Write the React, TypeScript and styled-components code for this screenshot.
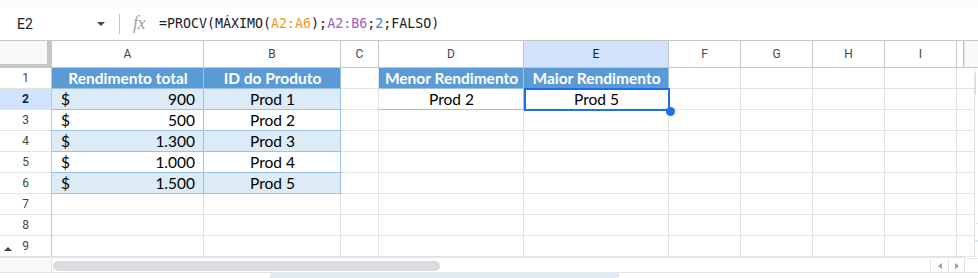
import React from 'react';
import styled, { createGlobalStyle } from 'styled-components';

const GlobalStyle = createGlobalStyle`
  body {
    margin: 0;
    background: #fff;
    font-family: Roboto, "Liberation Sans", Arial, sans-serif;
  }
`;

const GRID = '#e2e3e3';
const HEAD_LINE = '#c4c7c5';
const TABLE_LINE = '#9bc2e6';
const TABLE_HEAD = '#5b9bd5';
const TABLE_BAND = '#ddebf7';
const SELECT = '#1a73e8';

const columns = [
  { id: 'A', w: 152 },
  { id: 'B', w: 137 },
  { id: 'C', w: 38 },
  { id: 'D', w: 145 },
  { id: 'E', w: 145 },
  { id: 'F', w: 72 },
  { id: 'G', w: 72 },
  { id: 'H', w: 72 },
  { id: 'I', w: 72 },
];

const template = `52px ${columns.map((c) => `${c.w}px`).join(' ')} 7px`;

type Kind = 'head' | 'band' | 'white' | 'sel' | 'empty';
interface CellDef {
  kind: Kind;
  text?: string;
  money?: string;
}

const e: CellDef = { kind: 'empty' };

const rows: CellDef[][] = [
  [
    { kind: 'head', text: 'Rendimento total' },
    { kind: 'head', text: 'ID do Produto' },
    e,
    { kind: 'head', text: 'Menor Rendimento' },
    { kind: 'head', text: 'Maior Rendimento' },
  ],
  [
    { kind: 'band', money: '900' },
    { kind: 'band', text: 'Prod 1' },
    e,
    { kind: 'white', text: 'Prod 2' },
    { kind: 'sel', text: 'Prod 5' },
  ],
  [{ kind: 'white', money: '500' }, { kind: 'white', text: 'Prod 2' }],
  [{ kind: 'band', money: '1.300' }, { kind: 'band', text: 'Prod 3' }],
  [{ kind: 'white', money: '1.000' }, { kind: 'white', text: 'Prod 4' }],
  [{ kind: 'band', money: '1.500' }, { kind: 'band', text: 'Prod 5' }],
  [],
  [],
  [],
];

const Page = styled.div`
  width: 978px;
  height: 278px;
  display: flex;
  flex-direction: column;
  overflow: hidden;
`;

const TopStrip = styled.div`
  height: 8px;
  background: #f9fbfd;
`;

const FormulaBar = styled.div`
  height: 34px;
  box-sizing: border-box;
  border-bottom: 1px solid ${HEAD_LINE};
  display: flex;
  align-items: center;
`;

const NameBox = styled.div`
  width: 112px;
  box-sizing: border-box;
  padding: 0 7px 0 17px;
  display: flex;
  align-items: center;
  justify-content: space-between;
  font-size: 14px;
  color: #202124;
`;

const Caret = styled.span`
  width: 0;
  height: 0;
  border-left: 4px solid transparent;
  border-right: 4px solid transparent;
  border-top: 4px solid #444746;
`;

const Divider = styled.div`
  width: 1px;
  height: 20px;
  margin-left: 7px;
  background: ${HEAD_LINE};
`;

const Fx = styled.span`
  width: 16px;
  margin: 0 10px 0 13px;
  font-family: "Liberation Serif", "DejaVu Serif", serif;
  font-style: italic;
  font-size: 18px;
  color: #a0a4a8;
  letter-spacing: -0.5px;
`;

const Formula = styled.div`
  font-family: "DejaVu Sans Mono", "Liberation Mono", monospace;
  font-size: 13.3px;
  color: #202124;
  white-space: pre;
`;

const Ref = styled.span<{ $c: string }>`
  color: ${(p) => p.$c};
`;

const Main = styled.div`
  display: flex;
  height: 231px;
`;

const GridColumn = styled.div`
  width: 964px;
  display: flex;
  flex-direction: column;
`;

const Row = styled.div<{ $h: number }>`
  display: grid;
  grid-template-columns: ${template};
  height: ${(p) => p.$h}px;
`;

const Corner = styled.div`
  box-sizing: border-box;
  background: #f8f9fa;
  border-right: 5px solid ${HEAD_LINE};
  border-bottom: 4px solid ${HEAD_LINE};
`;

const ColHead = styled.div<{ $active?: boolean }>`
  box-sizing: border-box;
  border-right: 1px solid ${HEAD_LINE};
  border-bottom: 1px solid ${HEAD_LINE};
  background: ${(p) => (p.$active ? '#d3e3fd' : '#fff')};
  color: ${(p) => (p.$active ? '#0b1f4a' : '#444746')};
  font-size: 12px;
  display: flex;
  align-items: center;
  justify-content: center;
`;

const RowHead = styled.div<{ $active?: boolean }>`
  position: relative;
  box-sizing: border-box;
  border-right: 1px solid ${HEAD_LINE};
  border-bottom: 1px solid ${GRID};
  background: ${(p) => (p.$active ? '#d3e3fd' : '#fff')};
  color: ${(p) => (p.$active ? '#0b1f4a' : '#444746')};
  font-weight: ${(p) => (p.$active ? 700 : 400)};
  font-size: 12px;
  display: flex;
  align-items: center;
  justify-content: center;
`;

const FreezeMark = styled.span`
  position: absolute;
  left: 4px;
  top: 11px;
  width: 0;
  height: 0;
  border-left: 4px solid transparent;
  border-right: 4px solid transparent;
  border-bottom: 4px solid #444746;
`;

const Cell = styled.div<{ $bg: string; $line: string; $head?: boolean; $justify: string }>`
  position: relative;
  box-sizing: border-box;
  border-right: 1px solid ${(p) => p.$line};
  border-bottom: 1px solid ${(p) => p.$line};
  background: ${(p) => p.$bg};
  display: flex;
  align-items: flex-end;
  justify-content: ${(p) => p.$justify};
  padding: 0 8px 1px 9px;
  font-family: Lato, "Open Sans", sans-serif;
  font-size: 15.5px;
  line-height: 18px;
  font-weight: ${(p) => (p.$head ? 700 : 400)};
  color: ${(p) => (p.$head ? '#fff' : '#000')};
  white-space: nowrap;
`;

const SelectedCell = styled(Cell)`
  z-index: 3;
`;

const Selection = styled.div`
  position: absolute;
  top: -1px;
  left: 0;
  right: -2px;
  bottom: -2px;
  border: 2px solid ${SELECT};
  pointer-events: none;
`;

const FillHandle = styled.div`
  position: absolute;
  right: -7px;
  bottom: -7px;
  width: 9px;
  height: 9px;
  border-radius: 50%;
  background: ${SELECT};
`;

const Gap = styled.div`
  height: 2px;
  border-top: 1px solid ${GRID};
  box-sizing: border-box;
`;

const HScroll = styled.div`
  height: 13px;
  display: flex;
`;

const HScrollLeft = styled.div`
  width: 52px;
  box-sizing: border-box;
  background: #f8f9fa;
  border-right: 1px solid ${GRID};
`;

const HTrack = styled.div`
  flex: 1;
  padding: 2px 1px;
`;

const HThumb = styled.div`
  width: 387px;
  height: 10px;
  border-radius: 5px;
  background: #dadce0;
`;

const ArrowBox = styled.div<{ $w: number }>`
  width: ${(p) => p.$w}px;
  box-sizing: border-box;
  border-left: 1px solid ${GRID};
  display: flex;
  align-items: center;
  justify-content: center;
`;

const Tri = styled.span<{ $dir: 'left' | 'right' | 'up' | 'down' }>`
  width: 0;
  height: 0;
  ${({ $dir }) => {
    const c = '#9aa0a6';
    if ($dir === 'left') return `border-top:3px solid transparent;border-bottom:3px solid transparent;border-right:4px solid ${c};`;
    if ($dir === 'right') return `border-top:3px solid transparent;border-bottom:3px solid transparent;border-left:4px solid ${c};`;
    if ($dir === 'up') return `border-left:3px solid transparent;border-right:3px solid transparent;border-bottom:4px solid ${c};`;
    return `border-left:3px solid transparent;border-right:3px solid transparent;border-top:4px solid ${c};`;
  }}
`;

const VScroll = styled.div`
  width: 14px;
  box-sizing: border-box;
  border-left: 1px solid ${GRID};
  display: flex;
  flex-direction: column;
`;

const VHead = styled.div`
  height: 27px;
  box-sizing: border-box;
  background: #f8f9fa;
  border-bottom: 1px solid ${HEAD_LINE};
`;

const VTrack = styled.div`
  flex: 1;
  padding: 2px 1px;
`;

const VThumb = styled.div`
  width: 10px;
  height: 28px;
  border-radius: 5px;
  background: #dadce0;
`;

const VArrow = styled.div<{ $h: number; $accent?: boolean }>`
  height: ${(p) => p.$h}px;
  box-sizing: border-box;
  border-top: 1px solid ${GRID};
  border-bottom: ${(p) => (p.$accent ? '1px solid #d3e3fd' : '0')};
  display: flex;
  align-items: center;
  justify-content: center;
`;

const VCorner = styled.div`
  height: 13px;
  border-top: 1px solid ${GRID};
`;

const BottomStrip = styled.div`
  height: 5px;
  border-top: 1px solid ${GRID};
  display: flex;
`;

const TabHint = styled.div`
  margin-left: 270px;
  width: 349px;
  background: #e1e9f7;
`;

const money = (value: string) => (
  <>
    <span>$</span>
    <span>{value}</span>
  </>
);

function renderCell(def: CellDef, key: string) {
  const line = def.kind === 'empty' ? GRID : TABLE_LINE;
  const bg = def.kind === 'head' ? TABLE_HEAD : def.kind === 'band' ? TABLE_BAND : '#fff';
  const justify = def.money ? 'space-between' : 'center';
  const content = def.money ? money(def.money) : def.text;
  if (def.kind === 'sel') {
    return (
      <SelectedCell key={key} $bg="#fff" $line={TABLE_LINE} $justify={justify}>
        {content}
        <Selection />
        <FillHandle />
      </SelectedCell>
    );
  }
  return (
    <Cell key={key} $bg={bg} $line={line} $head={def.kind === 'head'} $justify={justify}>
      {content}
    </Cell>
  );
}

export default function App() {
  return (
    <Page>
      <GlobalStyle />
      <TopStrip />
      <FormulaBar>
        <NameBox>
          <span>E2</span>
          <Caret />
        </NameBox>
        <Divider />
        <Fx>fx</Fx>
        <Formula>
          =PROCV(MÁXIMO(<Ref $c="#f09a22">A2:A6</Ref>);<Ref $c="#9d62c6">A2:B6</Ref>;
          <Ref $c="#3b78e7">2</Ref>;FALSO)
        </Formula>
      </FormulaBar>
      <Main>
        <GridColumn>
          <Row $h={27}>
            <Corner />
            {columns.map((c) => (
              <ColHead key={c.id} $active={c.id === 'E'}>
                {c.id}
              </ColHead>
            ))}
            <ColHead />
          </Row>
          {rows.map((r, ri) => (
            <Row key={ri} $h={21}>
              <RowHead $active={ri === 1}>
                {ri === 8 && <FreezeMark />}
                {ri + 1}
              </RowHead>
              {columns.map((c, ci) => renderCell(r[ci] || e, `${ri}-${c.id}`))}
              <Cell $bg="#fff" $line={GRID} $justify="center" />
            </Row>
          ))}
          <Gap />
          <HScroll>
            <HScrollLeft />
            <HTrack>
              <HThumb />
            </HTrack>
            <ArrowBox $w={18}>
              <Tri $dir="left" />
            </ArrowBox>
            <ArrowBox $w={16}>
              <Tri $dir="right" />
            </ArrowBox>
          </HScroll>
        </GridColumn>
        <VScroll>
          <VHead />
          <VTrack>
            <VThumb />
          </VTrack>
          <VArrow $h={18} $accent>
            <Tri $dir="up" />
          </VArrow>
          <VArrow $h={17}>
            <Tri $dir="down" />
          </VArrow>
          <VCorner />
        </VScroll>
      </Main>
      <BottomStrip>
        <TabHint />
      </BottomStrip>
    </Page>
  );
}
